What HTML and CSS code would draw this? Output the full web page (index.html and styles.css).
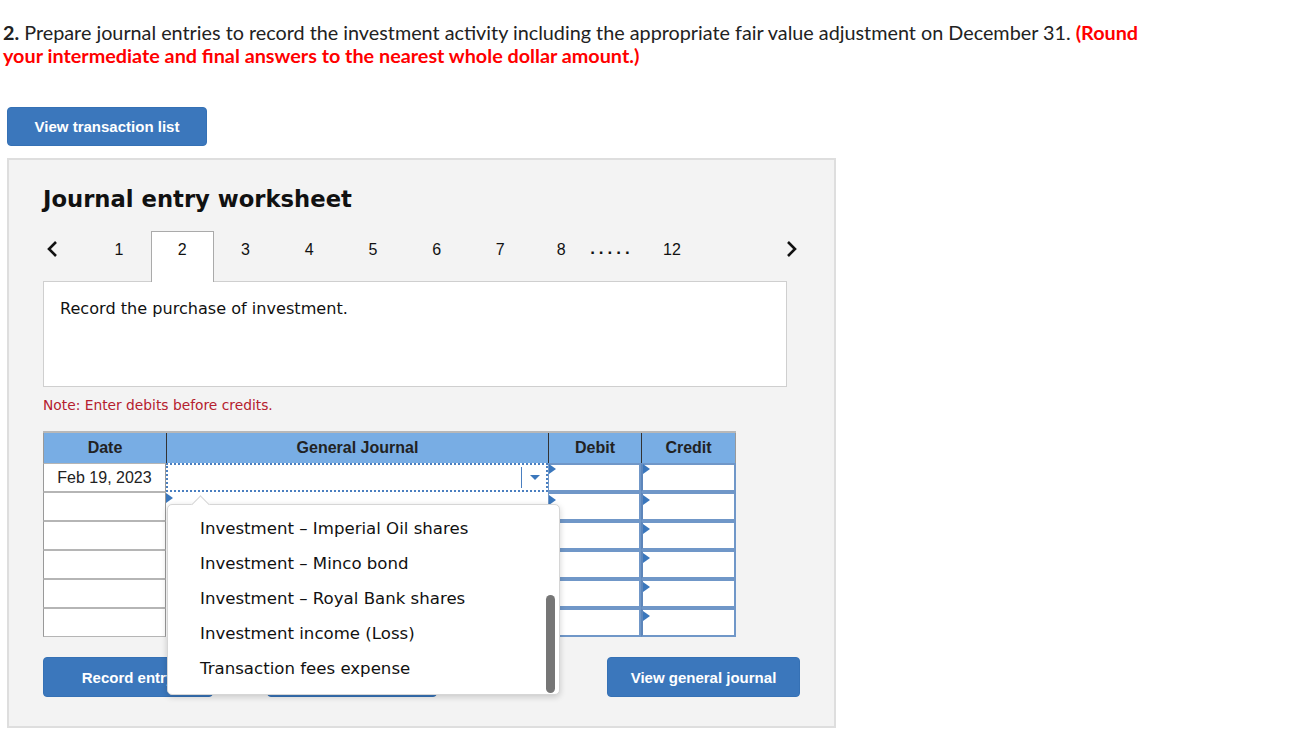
FILE: index.html
```
<!DOCTYPE html>
<html lang="en">
<head>
  <meta charset="UTF-8">
  <title>Journal entry worksheet</title>
  <link rel="stylesheet" href="styles.css">
</head>
<body>
  <!-- Question -->
  <p class="question">
    <b>2.</b> Prepare journal entries to record the investment activity including the appropriate fair value adjustment on December 31. <span class="round">(Round<br>your intermediate and final answers to the nearest whole dollar amount.)</span>
  </p>

  <button class="btn btn-list">View transaction list</button>

  <div class="worksheet">
    <h2>Journal entry worksheet</h2>

    <!-- Tabs -->
    <div class="tabs">
      <span class="arrow">
        <svg width="14" height="18" viewBox="0 0 14 18"><polyline points="10,2 3,9 10,16" fill="none" stroke="#111" stroke-width="2.6"/></svg>
      </span>
      <span class="tab">1</span>
      <span class="tab active">2</span>
      <span class="tab">3</span>
      <span class="tab">4</span>
      <span class="tab">5</span>
      <span class="tab">6</span>
      <span class="tab">7</span>
      <span class="tab tab-8">8</span>
      <span class="dots">.....</span>
      <span class="tab">12</span>
      <span class="spacer"></span>
      <span class="arrow arrow-right">
        <svg width="14" height="18" viewBox="0 0 14 18"><polyline points="4,2 11,9 4,16" fill="none" stroke="#111" stroke-width="2.6"/></svg>
      </span>
    </div>

    <div class="desc">Record the purchase of investment.</div>

    <p class="note">Note: Enter debits before credits.</p>

    <!-- Journal table -->
    <div class="journal">
      <div class="jrow head">
        <div class="c">Date</div>
        <div class="c">General Journal</div>
        <div class="c">Debit</div>
        <div class="c">Credit</div>
      </div>
      <div class="jrow">
        <div class="c date">Feb 19, 2023</div>
        <div class="c acct focus"><span class="caret"></span></div>
        <div class="c amt"></div>
        <div class="c amt"></div>
      </div>
      <div class="jrow">
        <div class="c date"></div>
        <div class="c acct mark"></div>
        <div class="c amt"></div>
        <div class="c amt"></div>
      </div>
      <div class="jrow">
        <div class="c date"></div>
        <div class="c acct"></div>
        <div class="c amt"></div>
        <div class="c amt"></div>
      </div>
      <div class="jrow">
        <div class="c date"></div>
        <div class="c acct"></div>
        <div class="c amt"></div>
        <div class="c amt"></div>
      </div>
      <div class="jrow">
        <div class="c date"></div>
        <div class="c acct"></div>
        <div class="c amt"></div>
        <div class="c amt"></div>
      </div>
      <div class="jrow">
        <div class="c date"></div>
        <div class="c acct"></div>
        <div class="c amt"></div>
        <div class="c amt"></div>
      </div>

      <!-- Dropdown list (open) -->
      <div class="dropdown">
        <ul>
          <li>Investment – Imperial Oil shares</li>
          <li>Investment – Minco bond</li>
          <li>Investment – Royal Bank shares</li>
          <li>Investment income (Loss)</li>
          <li>Transaction fees expense</li>
        </ul>
        <span class="scroll"></span>
      </div>
    </div>

    <div class="actions">
      <button class="btn btn-record">Record entry</button>
      <button class="btn btn-clear">Clear entry</button>
      <span class="spacer"></span>
      <button class="btn btn-view">View general journal</button>
    </div>
  </div>
</body>
</html>
```

FILE: styles.css
```
body {
  margin: 0;
  padding: 0;
  background: #fff;
  color: #222;
  font-family: Lato, "Open Sans", sans-serif;
}

.question {
  margin: 0;
  padding: 21px 0 0 3px;
  font-size: 19.8px;
  line-height: 23px;
  color: #222;
}

.question b {
  font-weight: 700;
}

.round {
  color: #f00;
  font-weight: 700;
}

.btn {
  display: block;
  background-color: #3b77bc;
  color: #fff;
  border: 1px solid #3571b5;
  border-radius: 4px;
  font-family: "Liberation Sans", Arial, sans-serif;
  font-weight: bold;
  font-size: 15px;
  height: 40px;
  padding: 0;
  cursor: pointer;
}

.btn-list {
  margin: 40px 0 0 7px;
  width: 200px;
  height: 39px;
}

/* Worksheet panel */
.worksheet {
  margin: 12px 0 0 7px;
  height: 566px;
  background: #f3f3f3;
  border: 2px solid #dedede;
  padding: 0 0 0 34px;
  box-sizing: content-box;
  position: relative;
  width: 791px;
}

.worksheet h2 {
  margin: 0;
  padding: 24px 0 0 0;
  font-family: Verdana, "DejaVu Sans", sans-serif;
  font-size: 22.7px;
  line-height: 30px;
  color: #111;
}

.tabs {
  display: flex;
  align-items: stretch;
  height: 50px;
  margin-top: 17px;
  font-family: "Liberation Sans", Arial, sans-serif;
  font-size: 16px;
  line-height: 18px;
  color: #111;
}

.arrow {
  width: 44px;
  padding: 9px 0 0 3px;
  box-sizing: border-box;
}

.arrow-right {
  width: 50px;
  padding-left: 0;
}

.tab {
  width: 63.7px;
  padding-top: 10px;
  text-align: center;
  box-sizing: border-box;
}

.tab.active {
  background: #fff;
  border: 1px solid #aaa;
  border-bottom: none;
  width: 63px;
  padding-top: 9px;
  margin-bottom: -1px;
  position: relative;
  z-index: 1;
}

.tab-8 {
  width: 58px;
}

.dots {
  width: 50px;
  padding-top: 9px;
  font-size: 17px;
  font-weight: bold;
  letter-spacing: 4px;
  box-sizing: border-box;
}

.spacer {
  flex: 1;
}

.desc {
  width: 744px;
  height: 106px;
  box-sizing: border-box;
  background: #fff;
  border: 1px solid #cfcfcf;
  padding: 17px 16px;
  font-family: Verdana, "DejaVu Sans", sans-serif;
  font-size: 16.1px;
  color: #111;
}

.note {
  margin: 10px 0 0 0;
  font-family: Verdana, "DejaVu Sans", sans-serif;
  font-size: 13.8px;
  color: #b5202e;
}

/* Journal table */
.journal {
  margin-top: 18px;
  width: 693px;
  position: relative;
  font-family: "Liberation Sans", Arial, sans-serif;
  font-size: 16px;
}

.jrow {
  display: grid;
  grid-template-columns: 123px 382px 93px 95px;
  height: 29px;
}

.jrow.head {
  height: 32px;
  background: #78ade4;
  border-top: 2px solid #b8b8b8;
  box-sizing: border-box;
}

.jrow.head .c {
  display: flex;
  align-items: center;
  justify-content: center;
  font-weight: bold;
  color: #222;
  border-left: 1px solid #333;
}

.jrow.head .c:first-child {
  border-left: 1px solid #999;
}

.jrow.head .c:last-child {
  border-right: 1px solid #999;
}

.c {
  box-sizing: border-box;
  position: relative;
}

.date {
  background: #fff;
  border: 1px solid #999;
  border-top: 1px solid #b5b5b5;
  border-bottom: 1px solid #b5b5b5;
  display: flex;
  align-items: center;
  justify-content: center;
  color: #222;
}

.acct {
  background: #fff;
}

.acct.focus {
  border: 2px dotted #4a7fc0;
}

.caret {
  position: absolute;
  right: 24px;
  top: 2px;
  bottom: 2px;
  border-left: 1px solid #4a7fc0;
}

.caret::after {
  content: "";
  position: absolute;
  left: 8px;
  top: 8px;
  border-left: 5px solid transparent;
  border-right: 5px solid transparent;
  border-top: 5px solid #3b77bc;
}

.amt {
  background: #fff;
  border: 2px solid #7097c8;
  border-left-width: 1px;
}

.amt + .amt {
  border-left: 2px solid #5d86bb;
}

.amt::before,
.mark::before {
  content: "";
  position: absolute;
  left: 0;
  top: 1px;
  border-top: 5px solid transparent;
  border-bottom: 5px solid transparent;
  border-left: 7px solid #3b77bc;
}

.acct.focus ~ .amt::before {
  top: -1px;
}

/* Open dropdown */
.dropdown {
  position: absolute;
  left: 124px;
  top: 73px;
  width: 393px;
  height: 191px;
  box-sizing: border-box;
  background: #fff;
  border: 1px solid #d6d6d6;
  border-radius: 5px;
  box-shadow: 0 2px 6px rgba(0, 0, 0, 0.18);
  z-index: 5;
}

.dropdown::before {
  content: "";
  position: absolute;
  left: 26px;
  top: -7px;
  width: 12px;
  height: 12px;
  background: #fff;
  border-left: 1px solid #d6d6d6;
  border-top: 1px solid #d6d6d6;
  transform: rotate(45deg);
}

.dropdown ul {
  list-style: none;
  margin: 0;
  padding: 6px 0 0 32px;
  font-family: Verdana, "DejaVu Sans", sans-serif;
  font-size: 16.6px;
  color: #111;
}

.dropdown li {
  height: 35px;
  line-height: 35px;
}

.scroll {
  position: absolute;
  right: 4px;
  top: 90px;
  width: 9px;
  height: 98px;
  background: #767676;
  border-radius: 5px;
}

/* Buttons at the bottom */
.actions {
  display: flex;
  width: 757px;
  margin-top: 20px;
}

.actions .btn {
  height: 40px;
}

.btn-record,
.btn-clear {
  width: 170px;
}

.btn-clear {
  margin-left: 54px;
}

.btn-view {
  width: 193px;
}
```
